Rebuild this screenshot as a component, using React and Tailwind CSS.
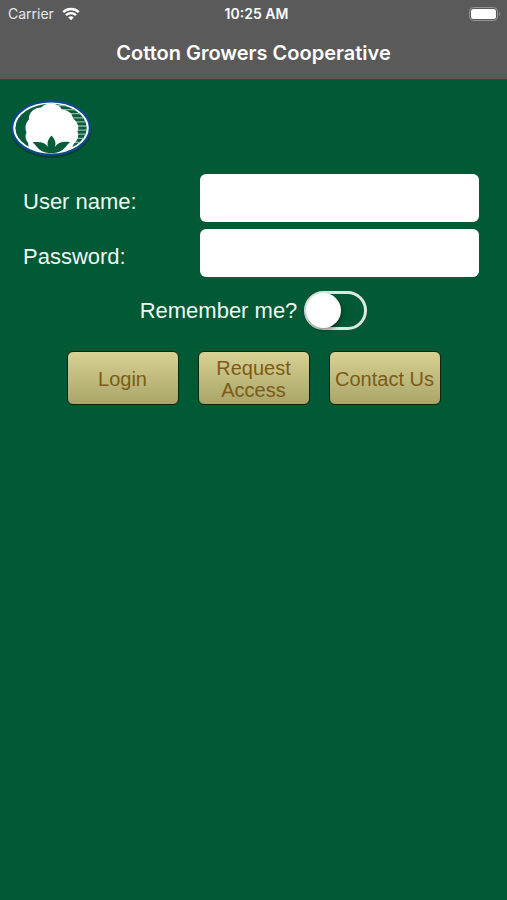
import React from "react";

function WifiIcon() {
  return (
    <svg className="h-3.5 w-[18px]" viewBox="0 0 18 14" fill="none" stroke="#fff" strokeWidth="2.4" aria-hidden="true">
      <path d="M1.2 5.1C5.5 1 12.5 1 16.8 5.1" />
      <path d="M4 8.1C6.8 5.5 11.2 5.5 14 8.1" />
      <path d="M6.2 10.4C7.8 9 10.2 9 11.8 10.4L9 13.2Z" fill="#fff" stroke="none" />
    </svg>
  );
}

function BatteryIcon() {
  return (
    <svg className="h-3.5 w-8" viewBox="0 0 32 14" fill="none" aria-hidden="true">
      <rect x="0.5" y="0.5" width="28" height="13" rx="4" stroke="#949494" />
      <rect x="2" y="2" width="25" height="10" rx="2.5" fill="#fff" />
      <path d="M30 5C31.6 5.6 31.6 8.4 30 9Z" fill="#949494" />
    </svg>
  );
}

function Logo() {
  return (
    <svg className="h-[62px] w-[86px]" viewBox="8 98 86 62" role="img" aria-label="Cotton boll logo">
      <defs>
        <clipPath id="disc">
          <ellipse cx="51" cy="128" rx="36" ry="24.5" />
        </clipPath>
      </defs>
      <ellipse cx="51" cy="129.5" rx="40.5" ry="28.5" fill="#06402b" />
      <ellipse cx="51" cy="128" rx="40.2" ry="28" fill="#0b4a8c" />
      <ellipse cx="51" cy="128" rx="37.8" ry="25.6" fill="#fff" />
      <ellipse cx="51" cy="128" rx="35.6" ry="24.2" fill="#075c3a" />
      <g clipPath="url(#disc)">
        <path
          d="M58 105.5H90M60 109.6H90M64 113.7H90M72 117.8H90M74 121.9H90M76 126H90M76 130.1H90M76 134.2H90M75 138.3H90M72 142.4H90"
          stroke="#8fb8a2"
          strokeWidth="1.3"
        />
        <path
          d="M41 107.5C43.5 104.5 49 102.5 53 103.8C57.500 104.2 60.5 106.5 61.5 109.5C67 109.5 72.5 113 73 118.5C77.5 121.5 79.5 127 77.5 131.5C79.5 136 77 141.5 74 143.5L71 150L62 154H39L29 149L28 142.500C26 140.5 24.5 136.5 26.5 132.5C24.5 128 25.5 122.5 29 119.5C28 113 34.5 107.5 41 107.5Z"
          fill="#fff"
        />
      </g>
      <path
        d="M51.5 135.500C56 140.5 56 144 54.8 147C58 142.5 63 141 70 142.300C66.500 145 66 147.500 62.500 150C59 152.500 55.500 153 51.500 153C47.500 153 43.500 152.500 40 150C36.500 147.500 36 145 32.500 142.300C40.500 141 45.500 143 48.300 147C47 144 47 140.500 51.500 135.500Z"
        fill="#075c3a"
      />
    </svg>
  );
}

function Field({ id, label, type }) {
  return (
    <div className="flex items-center">
      <label htmlFor={id} className="w-[177px] shrink-0 pt-2 text-[22px] leading-7">
        {label}
      </label>
      <input
        id={id}
        name={id}
        type={type}
        className="h-12 min-w-0 flex-1 rounded-md bg-white px-3 text-xl text-black"
      />
    </div>
  );
}

function GoldButton({ children }) {
  return (
    <button
      type="button"
      className="h-[54px] w-28 rounded-md border border-[#10240f] bg-linear-to-b from-[#d8d394] to-[#a9a468] pt-px text-xl leading-[22px] text-[#7d5b16]"
    >
      {children}
    </button>
  );
}

export default function App() {
  return (
    <div className="min-h-screen bg-[#025935] font-['Liberation_Sans',Arial,sans-serif] text-[#eef8f2]">
      <header className="h-[79px] bg-[#5a5a5a] font-[Inter,sans-serif] text-white">
        <div className="grid h-7 grid-cols-3 items-center pr-1.5 pl-2">
          <div className="flex items-center gap-2 text-sm text-[#e8e8e8]">
            <span>Carrier</span>
            <WifiIcon />
          </div>
          <span className="pl-1 text-center text-sm font-semibold">10:25 AM</span>
          <div className="flex justify-end">
            <BatteryIcon />
          </div>
        </div>
        <h1 className="pt-[11px] text-center text-xl leading-7 font-semibold">Cotton Growers Cooperative</h1>
      </header>

      <main>
        <div className="px-2 pt-[19px]">
          <Logo />
        </div>
        <form className="pt-3.5">
          <div className="flex flex-col gap-[7px] pr-7 pl-[23px]">
            <Field id="username" label="User name:" type="text" />
            <Field id="password" label="Password:" type="password" />
          </div>

          <label className="mt-3.5 flex items-center justify-center gap-[7px] text-[22px] leading-7">
            <span className="pt-px">Remember me?</span>
            <span className="relative flex h-[39px] w-[63px]">
              <input
                type="checkbox"
                name="remember"
                className="peer h-full w-full appearance-none rounded-full border-[3px] border-[#dde8e1]"
              />
              <span className="pointer-events-none absolute top-0.5 left-0.5 size-[35px] rounded-full bg-white shadow-[1px_2px_4px_rgba(0,0,0,0.4)] peer-checked:left-[26px]" />
            </span>
          </label>

          <div className="mt-[21px] flex justify-center gap-[19px]">
            <GoldButton>Login</GoldButton>
            <GoldButton>
              Request
              <br />
              Access
            </GoldButton>
            <GoldButton>Contact Us</GoldButton>
          </div>
        </form>
      </main>
    </div>
  );
}
